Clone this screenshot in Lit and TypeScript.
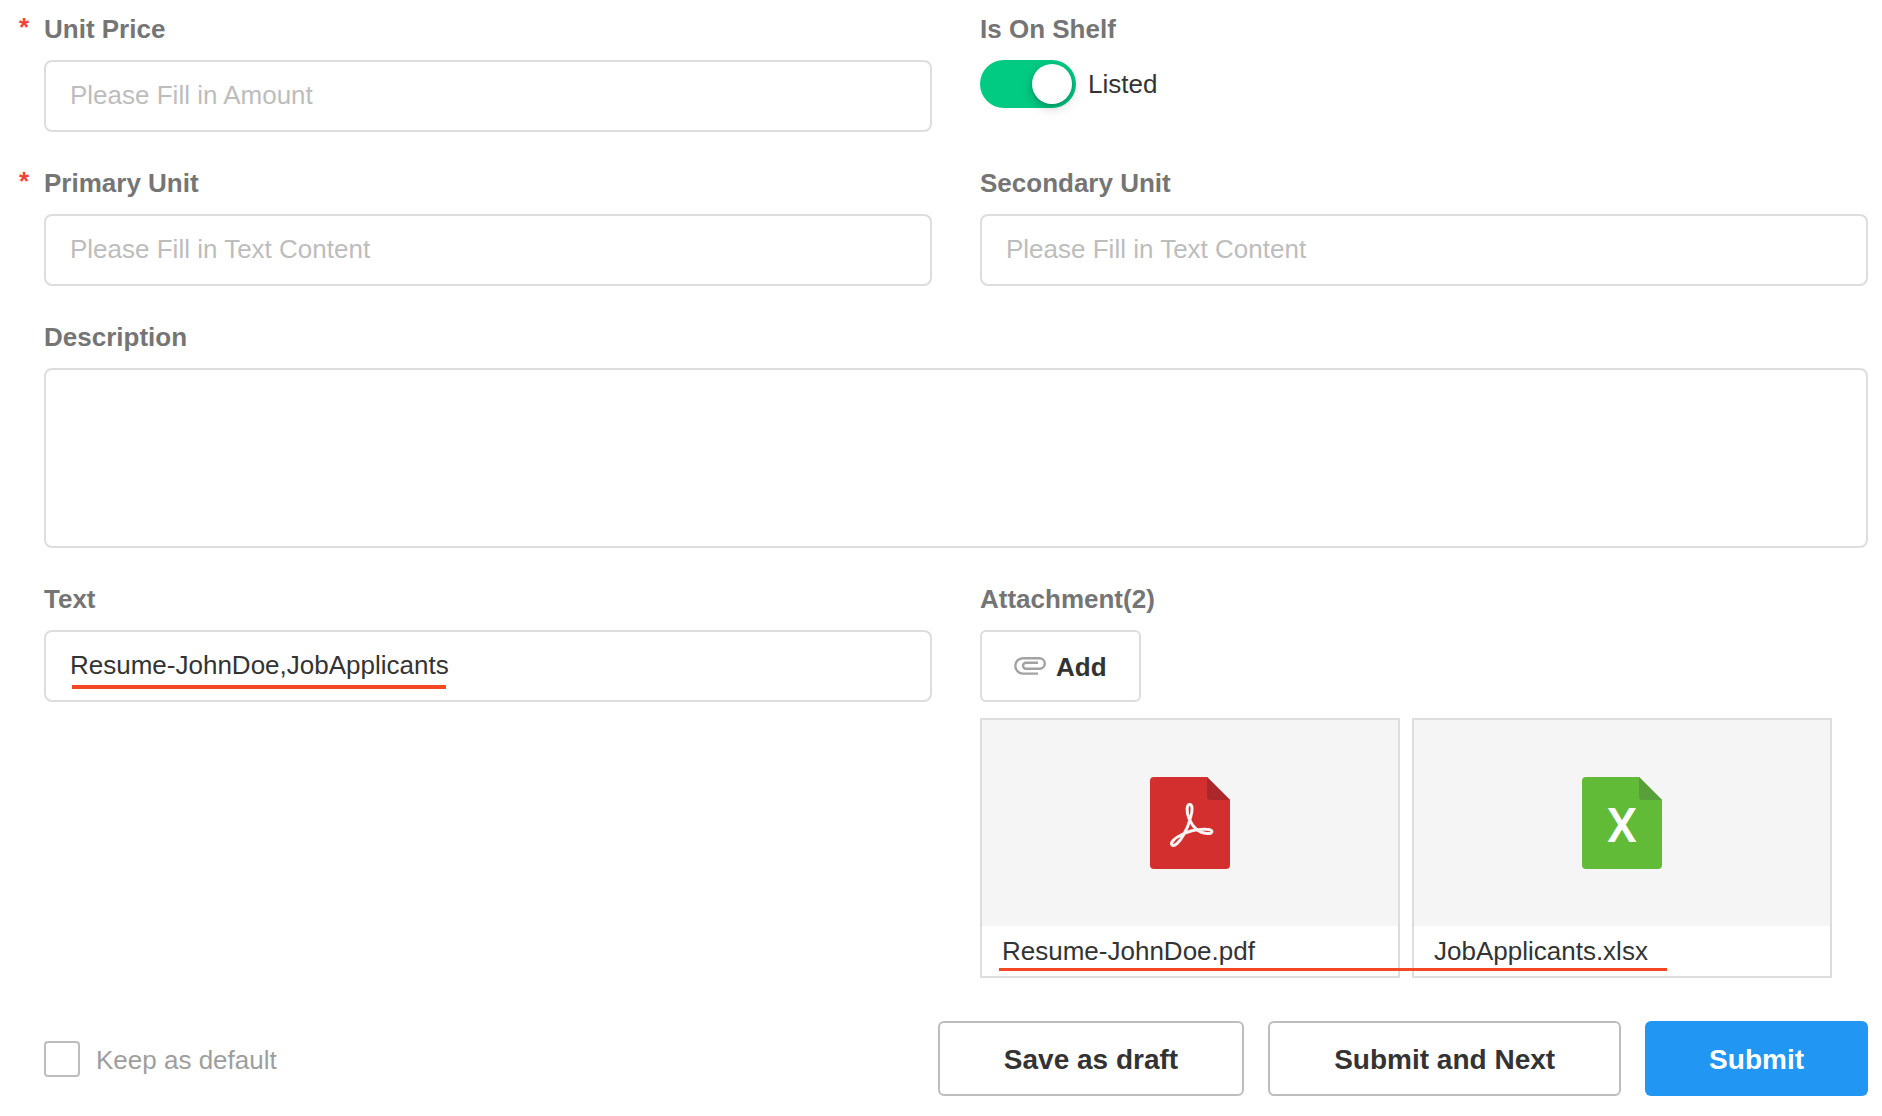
import { LitElement, html, css, svg } from "lit";
import { customElement, property, state } from "lit/decorators.js";

interface Attachment {
  name: string;
  kind: "pdf" | "sheet";
}

@customElement("file-icon")
class FileIcon extends LitElement {
  @property() kind: Attachment["kind"] = "pdf";

  static styles = css`
    :host {
      display: block;
      line-height: 0;
    }
    .icon {
      width: 80px;
      height: 92px;
    }
    .letter {
      font: 500 48px Roboto, "Liberation Sans", sans-serif;
      fill: #fff;
      text-anchor: middle;
    }
  `;

  render() {
    const pdf = this.kind === "pdf";
    return html`
      <svg class="icon" viewBox="0 0 80 92" aria-hidden="true">
        <path
          fill=${pdf ? "#d32f2f" : "#61bb37"}
          d="M4 0H57L80 23V88a4 4 0 0 1-4 4H4a4 4 0 0 1-4-4V4a4 4 0 0 1 4-4Z"
        />
        <path fill=${pdf ? "#ab272b" : "#579f38"} d="M57 0 80 23H61a4 4 0 0 1-4-4Z" />
        ${pdf
          ? svg`<path fill="none" stroke="#f8f4f4" stroke-width="3" stroke-linejoin="round"
              d="M39.7 27.5C36.5 27.5 36.3 35 39 41.500C42 48.500 48 56 57 56.500C64 57 63.500 52.200 56 52.200C47 52 37 54.500 31 58C24.500 61 20 66 22 68C24.500 70 29.500 65 33.500 58C37 52 39 47 40.700 40C42.800 33 42.500 27.500 39.700 27.500Z" />`
          : svg`<text class="letter" x="40" y="65">X</text>`}
      </svg>
    `;
  }
}

@customElement("app-root")
class AppRoot extends LitElement {
  @state() private listed = true;

  private attachments: Attachment[] = [
    { name: "Resume-JohnDoe.pdf", kind: "pdf" },
    { name: "JobApplicants.xlsx", kind: "sheet" },
  ];

  static styles = css`
    :host {
      display: block;
      background: #fff;
      color: #333;
      font: 26px/30px "Liberation Sans", "Helvetica Neue", Arial, sans-serif;
    }
    * {
      box-sizing: border-box;
    }
    .form {
      padding: 14px 14px 20px 44px;
    }
    .grid {
      display: grid;
      grid-template-columns: repeat(2, minmax(0, 1fr));
      gap: 36px 48px;
    }
    .wide {
      grid-column: 1 / -1;
    }
    .label {
      display: block;
      position: relative;
      margin: 0 0 16px;
      color: #757575;
      font-size: 26px;
      font-weight: bold;
      line-height: 30px;
    }
    .required::before {
      content: "*";
      position: absolute;
      left: -25px;
      color: #f44336;
      line-height: 26px;
    }
    .input {
      display: block;
      width: 100%;
      height: 72px;
      padding: 0 24px 2px;
      border: 2px solid #ddd;
      border-radius: 8px;
      background: #fff;
      color: #333;
      font: inherit;
      outline: none;
    }
    .input::placeholder {
      color: #bdbdbd;
      opacity: 1;
    }
    .area {
      height: 180px;
      padding: 20px 24px;
      resize: none;
    }
    .input:focus {
      border-color: #2196f3;
    }
    .marked {
      position: relative;
    }
    .mark {
      position: absolute;
      background: #f44723;
      pointer-events: none;
    }
    .mark-text {
      left: 28px;
      bottom: 13px;
      width: 374px;
      height: 4px;
    }
    .mark-files {
      left: 19px;
      bottom: 7px;
      width: 668px;
      height: 3px;
    }
    .switch-row {
      display: flex;
      align-items: center;
      gap: 12px;
    }
    .switch {
      appearance: none;
      display: flex;
      align-items: center;
      width: 96px;
      height: 48px;
      margin: 0;
      padding: 4px;
      border-radius: 24px;
      background: #bdbdbd;
      cursor: pointer;
    }
    .switch::before {
      content: "";
      width: 40px;
      height: 40px;
      border-radius: 50%;
      background: #fff;
      box-shadow: 0 4px 12px rgba(0, 0, 0, 0.2), 0 2px 4px rgba(0, 0, 0, 0.15);
    }
    .switch:checked {
      justify-content: flex-end;
      background: #01ca83;
    }
    .add {
      display: flex;
      align-items: center;
      gap: 10px;
      height: 72px;
      padding: 0 32px;
      border: 2px solid #ddd;
      border-radius: 6px;
      background: #fff;
      color: #333;
      font: inherit;
      font-weight: bold;
      cursor: pointer;
    }
    .clip {
      width: 32px;
      height: 18px;
      fill: none;
      stroke: #a2a2a2;
    }
    .files {
      display: grid;
      grid-template-columns: repeat(2, minmax(0, 1fr));
      gap: 12px;
      margin: 16px 36px 0 0;
    }
    .file {
      border: 2px solid #ddd;
      background: #fff;
    }
    .preview {
      display: flex;
      align-items: center;
      justify-content: center;
      height: 206px;
      background: #f5f5f5;
    }
    .name {
      display: block;
      padding: 10px 20px;
      overflow: hidden;
      text-overflow: ellipsis;
      white-space: nowrap;
    }
    .footer {
      display: flex;
      align-items: center;
      gap: 24px;
      margin-top: 43px;
    }
    .keep {
      display: flex;
      align-items: center;
      gap: 16px;
      margin-right: auto;
      color: #9e9e9e;
    }
    .caption {
      padding-top: 2px;
    }
    .check {
      appearance: none;
      width: 36px;
      height: 36px;
      margin: 0;
      border: 2px solid #bdbdbd;
      border-radius: 4px;
      background: #fff;
    }
    .check:checked {
      border-color: #2196f3;
      background: #2196f3;
    }
    .button {
      height: 75px;
      padding: 2px 64px 0;
      border: 2px solid #bdbdbd;
      border-radius: 6px;
      background: #fff;
      color: #333;
      font: bold 28px/32px "Liberation Sans", "Helvetica Neue", Arial, sans-serif;
      cursor: pointer;
    }
    .primary {
      border-width: 0;
      background: #2196f3;
      color: #fff;
    }
  `;

  private toggle(event: Event) {
    this.listed = (event.target as HTMLInputElement).checked;
  }

  render() {
    return html`
      <form class="form" @submit=${(e: Event) => e.preventDefault()}>
        <div class="grid">
          <div>
            <label class="label required" for="price">Unit Price</label>
            <input class="input" id="price" placeholder="Please Fill in Amount" />
          </div>
          <div>
            <label class="label" for="shelf">Is On Shelf</label>
            <div class="switch-row">
              <input class="switch" id="shelf" type="checkbox" role="switch" .checked=${this.listed} @change=${this.toggle} />
              <label for="shelf">${this.listed ? "Listed" : "Unlisted"}</label>
            </div>
          </div>
          <div>
            <label class="label required" for="primary">Primary Unit</label>
            <input class="input" id="primary" placeholder="Please Fill in Text Content" />
          </div>
          <div>
            <label class="label" for="secondary">Secondary Unit</label>
            <input class="input" id="secondary" placeholder="Please Fill in Text Content" />
          </div>
          <div class="wide">
            <label class="label" for="description">Description</label>
            <textarea class="input area" id="description"></textarea>
          </div>
          <div>
            <label class="label" for="text">Text</label>
            <div class="marked">
              <input class="input" id="text" .value=${"Resume-JohnDoe,JobApplicants"} />
              <span class="mark mark-text"></span>
            </div>
          </div>
          <div>
            <h2 class="label">Attachment(${this.attachments.length})</h2>
            <button class="add" type="button">
              <svg class="clip" viewBox="0 0 32 18" stroke-width="2.4" aria-hidden="true">
                <path d="M24 16.6H9A7.7 7.7 0 0 1 9 1.2H25.5a5.3 5.3 0 0 1 0 10.6H12a3 3 0 0 1 0-6H24" />
              </svg>
              <span class="caption">Add</span>
            </button>
            <div class="files marked">
              ${this.attachments.map(
                (file) => html`
                  <div class="file">
                    <div class="preview"><file-icon .kind=${file.kind}></file-icon></div>
                    <span class="name">${file.name}</span>
                  </div>
                `,
              )}
              <span class="mark mark-files"></span>
            </div>
          </div>
        </div>
        <div class="footer">
          <label class="keep"><input class="check" type="checkbox" /><span class="caption">Keep as default</span></label>
          <button class="button" type="button">Save as draft</button>
          <button class="button" type="button">Submit and Next</button>
          <button class="button primary" type="submit">Submit</button>
        </div>
      </form>
    `;
  }
}
